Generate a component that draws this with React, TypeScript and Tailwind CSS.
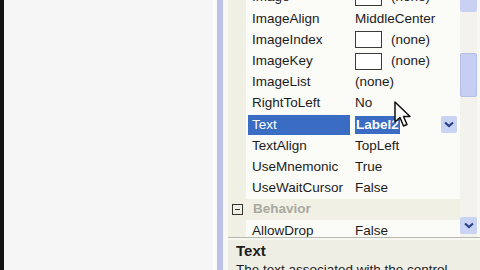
import React from "react"

type Row = {
  name: string
  value?: string
  box?: boolean
  selected?: boolean
}

const rows: Row[] = [
  { name: "Image", value: "(none)", box: true },
  { name: "ImageAlign", value: "MiddleCenter" },
  { name: "ImageIndex", value: "(none)", box: true },
  { name: "ImageKey", value: "(none)", box: true },
  { name: "ImageList", value: "(none)" },
  { name: "RightToLeft", value: "No" },
  { name: "Text", value: "Label2", selected: true },
  { name: "TextAlign", value: "TopLeft" },
  { name: "UseMnemonic", value: "True" },
  { name: "UseWaitCursor", value: "False" },
]

const Chevron = () => (
  <svg width="10" height="7" viewBox="0 0 10 7">
    <path d="M1 1.5 L5 5 L9 1.5" fill="none" stroke="#2b3f8c" strokeWidth="2.2" />
  </svg>
)

const PropRow = ({ name, value, box, selected }: Row) => {
  return (
    <div className="flex h-[21.2px] shrink-0 items-center">
      <div className="h-full w-[18px] bg-[#f1f0e4]" />
      <div className="flex h-full w-[107px] items-center pl-[2px]">
        <div className={`flex h-[20px] w-[102px] items-center pl-[4px] ${selected ? "bg-[#3a6cc4] text-white" : ""}`}>
          {name}
        </div>
      </div>
      <div className="flex h-full flex-1 items-center pl-[2px]">
        {box && <div className="mr-[9px] h-[17px] w-[27px] border border-[#3a3a3a] bg-white" />}
        {selected ? (
          <>
            <span className="bg-[#3a6cc4] px-[1px] font-bold leading-[18px] text-white">{value}</span>
            <div className="ml-auto mr-[3px] flex h-[17px] w-[16px] items-center justify-center rounded-[2px] bg-[#c9d3f3]">
              <Chevron />
            </div>
          </>
        ) : (
          <span>{value}</span>
        )}
      </div>
    </div>
  )
}

export default function App() {
  return (
    <div className="flex h-[270px] w-[480px] overflow-hidden bg-white font-['Liberation_Sans',Arial,sans-serif] text-[13.5px] text-[#1c1c1c]">
      <div className="w-[4px] bg-[#141414]" />
      <div className="w-[209px] bg-[#f6f6f6]" />
      <div className="w-[4px] bg-[#fbfbfb]" />
      <div className="w-[6px] bg-[#bdc3e6]" />
      <div className="w-[5px] bg-[#f8f8f4]" />

      <div className="flex flex-1 flex-col overflow-hidden">
        <div className="relative flex h-[237px] shrink-0 overflow-hidden bg-[#fbfbf8]">
          <div className="mt-[-13px] flex flex-1 flex-col">
            {rows.map((r) => (
              <PropRow key={r.name} {...r} />
            ))}
            <div className="flex h-[21.2px] shrink-0 items-center bg-[#f1f0e4]">
              <div className="flex w-[18px] justify-center">
                <div className="flex h-[11px] w-[11px] items-center justify-center border-[1.5px] border-[#333]">
                  <div className="h-[1.5px] w-[5px] bg-[#333]" />
                </div>
              </div>
              <span className="pl-[7px] font-bold text-[#a9a9a2]">Behavior</span>
            </div>
            <PropRow name="AllowDrop" value="False" />
          </div>

          <div className="flex w-[17px] flex-col bg-[#f3f2ec]">
            <div className="h-[12px] shrink-0 rounded-b-[2px] bg-[#c9d1f2]" />
            <div className="h-[41px] shrink-0" />
            <div className="h-[44px] shrink-0 rounded-[2px] border border-[#b4bfe9] bg-[#c6cff3]" />
            <div className="flex-1" />
            <div className="mb-[3px] flex h-[17px] shrink-0 items-center justify-center rounded-[2px] bg-[#c9d3f3]">
              <Chevron />
            </div>
          </div>
          <div className="w-[3px] bg-[#f8f8f4]" />

          <svg className="absolute left-[166px] top-[101px]" width="18" height="27" viewBox="0 0 18 27">
            <path d="M1 1 L1 21 L6 16.5 L9.5 25 L13 23.5 L9.5 15.5 L16 15.5 Z" fill="#fff" stroke="#111" strokeWidth="1.5" strokeLinejoin="round" />
          </svg>
        </div>

        <div className="h-[1px] shrink-0 bg-[#b9b8ae]" />
        <div className="h-[2px] shrink-0 bg-[#f8f8f2]" />
        <div className="flex shrink-0 flex-col bg-[#efeee4] pl-[8px] pt-[1px]">
          <div className="text-[15px] font-bold leading-[20px]">Text</div>
          <div className="whitespace-nowrap leading-[17px]">The text associated with the control.</div>
        </div>
      </div>
    </div>
  )
}
